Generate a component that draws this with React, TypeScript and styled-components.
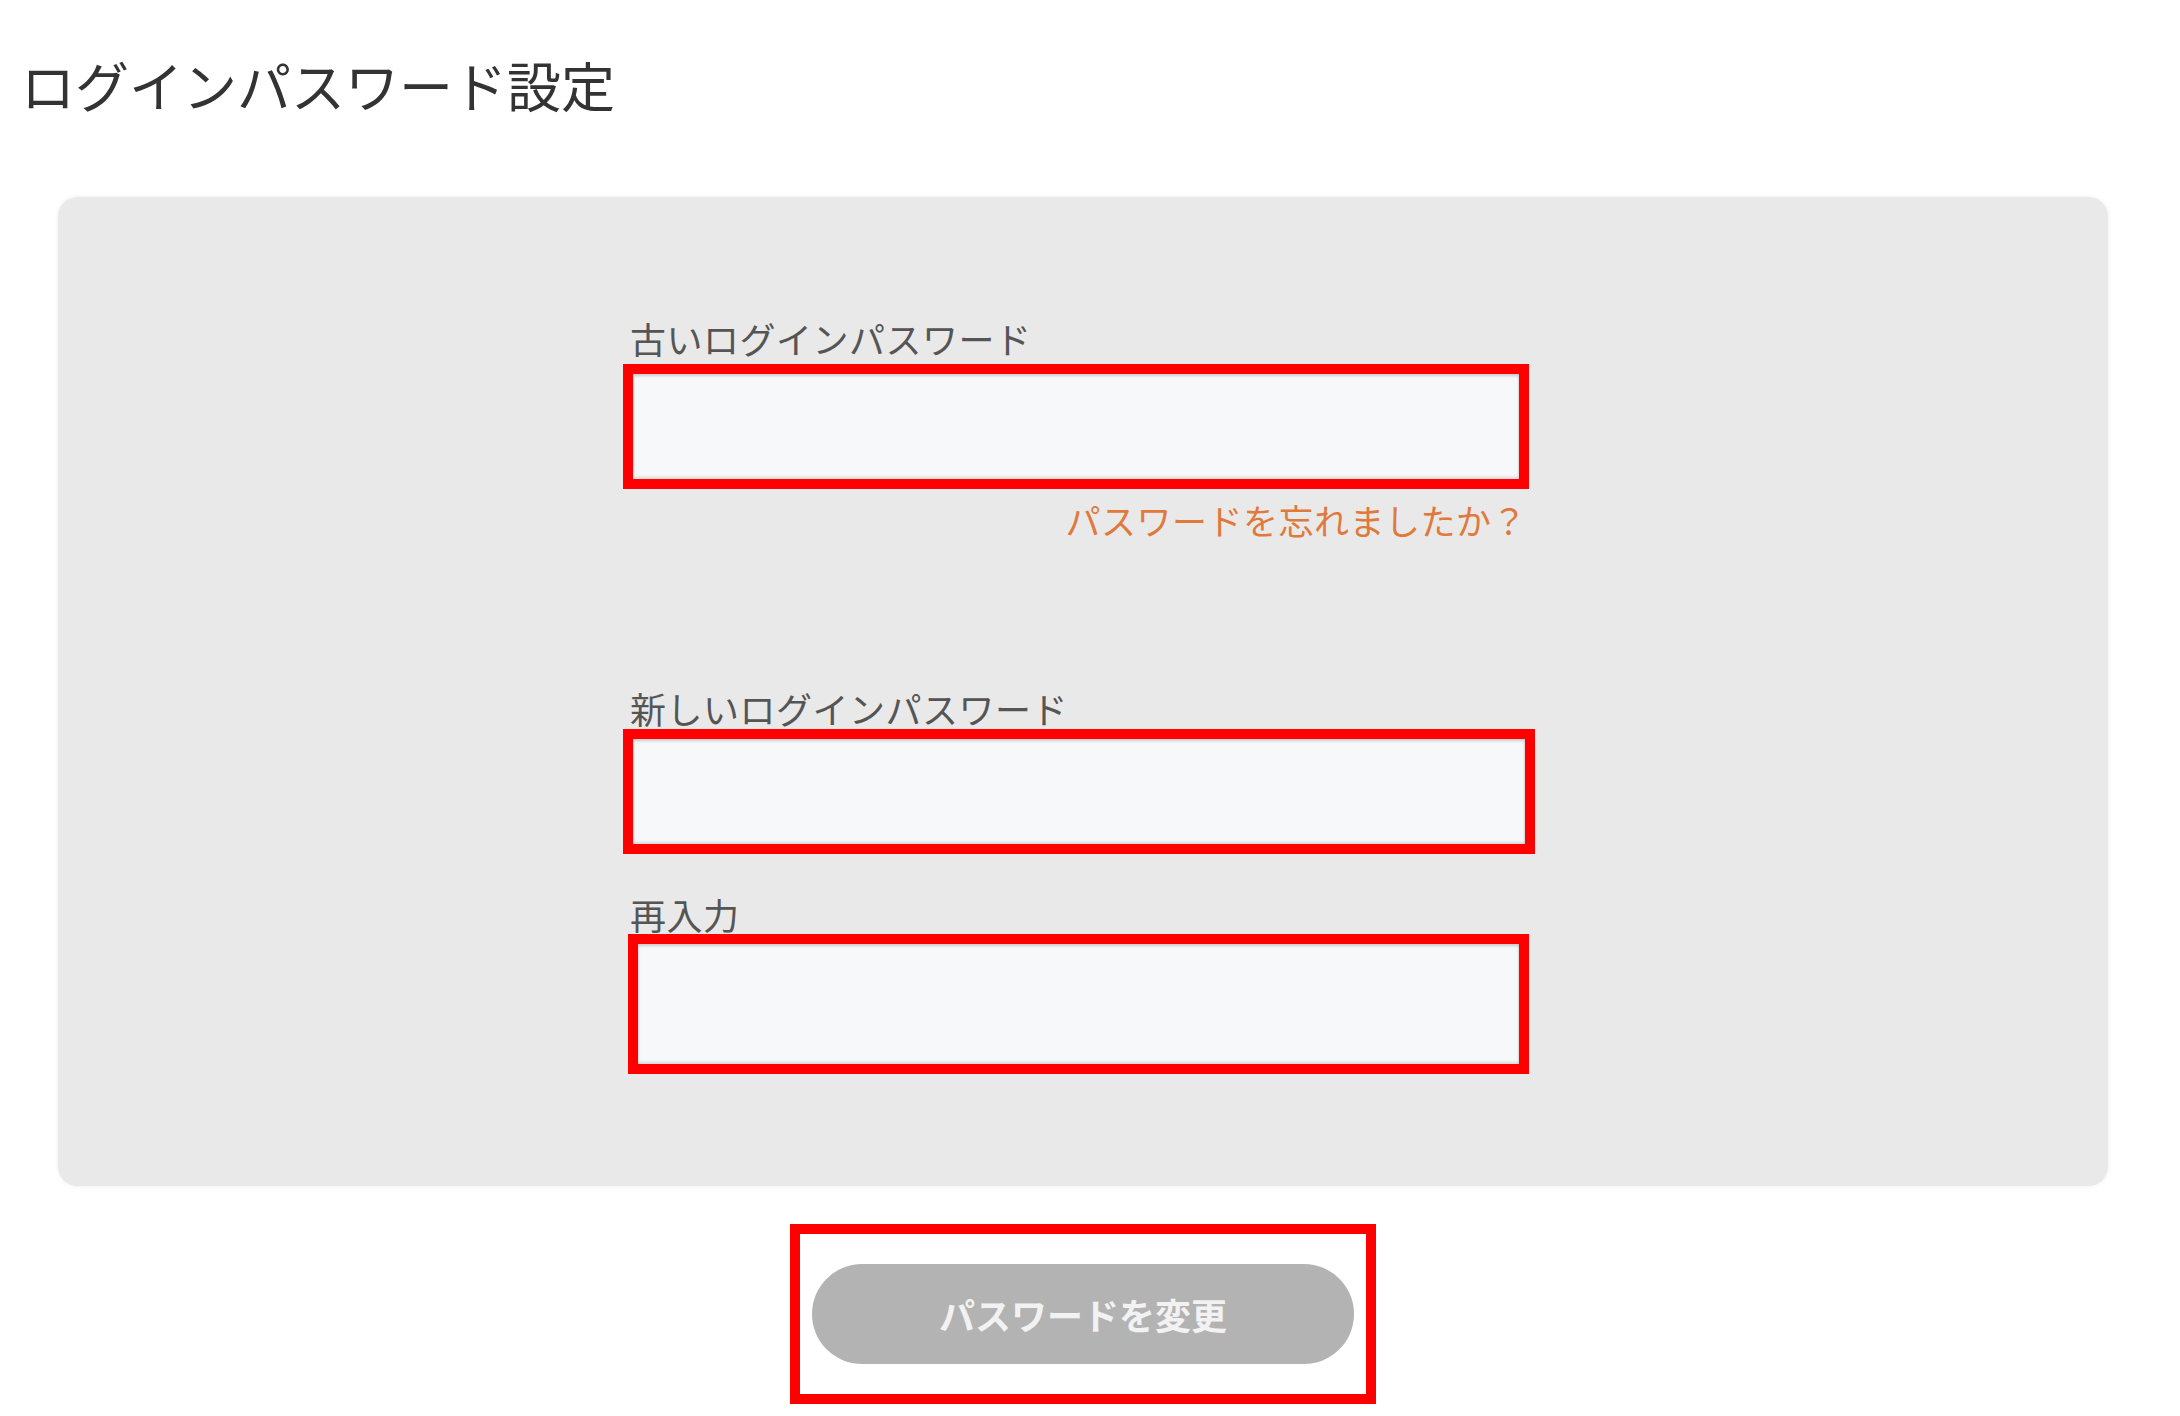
import styled, { createGlobalStyle } from "styled-components";

const GlobalStyle = createGlobalStyle`
  body {
    margin: 0;
    background: #ffffff;
    font-family: "Noto Sans CJK JP", "Noto Sans", sans-serif;
  }
`;

const App = () => {
  return (
    <Page>
      <GlobalStyle />
      <Title>ログインパスワード設定</Title>
      <Panel>
        <Column>
          <Label htmlFor="old">古いログインパスワード</Label>
          <Field width={906} height={125} top={6}>
            <Input id="old" type="password" />
          </Field>
          <ForgotRow width={906}>
            <Forgot href="#">パスワードを忘れましたか？</Forgot>
          </ForgotRow>

          <Label htmlFor="new" gap={148}>
            新しいログインパスワード
          </Label>
          <Field width={912} height={125} top={1}>
            <Input id="new" type="password" />
          </Field>

          <Label htmlFor="again" gap={40}>
            再入力
          </Label>
          <Field width={901} height={140} offset={5}>
            <Input id="again" type="password" />
          </Field>
        </Column>
      </Panel>
      <Bottom>
        <ButtonFrame>
          <Button type="button" disabled>
            パスワードを変更
          </Button>
        </ButtonFrame>
      </Bottom>
    </Page>
  );
};

export default App;

const Page = styled.div`
  width: 2180px;
  min-height: 1416px;
  background: #ffffff;
`;

const Title = styled.h1`
  margin: 0;
  padding: 53px 0 0 21px;
  font-size: 54px;
  line-height: 64px;
  font-weight: 400;
  color: #333333;
`;

const Panel = styled.div`
  margin: 80px 0 0 58px;
  width: 2050px;
  box-sizing: border-box;
  padding: 121px 0 112px;
  background: #e9e9e9;
  border-radius: 20px;
  box-shadow: 0 0 4px rgba(0, 0, 0, 0.08);
  display: flex;
  justify-content: center;
`;

const Column = styled.div`
  width: 912px;
  margin-left: -8px;
  display: flex;
  flex-direction: column;
`;

const Label = styled.label<{ gap?: number }>`
  display: block;
  margin-top: ${(p) => p.gap ?? 0}px;
  padding-left: 7px;
  font-size: 36px;
  line-height: 40px;
  color: #555555;
  letter-spacing: 0.5px;
`;

const Field = styled.div<{
  width: number;
  height: number;
  offset?: number;
  top?: number;
}>`
  width: ${(p) => p.width}px;
  height: ${(p) => p.height}px;
  margin-left: ${(p) => p.offset ?? 0}px;
  margin-top: ${(p) => p.top ?? 0}px;
  box-sizing: border-box;
  border: 10px solid #ff0000;
  display: flex;
`;

const Input = styled.input`
  flex: 1;
  border: none;
  outline: none;
  background: #f7f8fa;
  box-shadow: inset 0 2px 3px rgba(0, 0, 0, 0.18),
    inset 0 -2px 3px rgba(0, 0, 0, 0.12);
  font-size: 30px;
  padding: 0 16px;
`;

const ForgotRow = styled.div<{ width: number }>`
  width: ${(p) => p.width}px;
  margin-top: 11px;
  display: flex;
  justify-content: flex-end;
`;

const Forgot = styled.a`
  font-size: 35px;
  line-height: 40px;
  color: #e07a3c;
  text-decoration: none;
  letter-spacing: 0.5px;
  padding-right: 2px;
`;

const Bottom = styled.div`
  margin: 38px 0 0 58px;
  width: 2050px;
  display: flex;
  justify-content: center;
`;

const ButtonFrame = styled.div`
  width: 586px;
  height: 180px;
  box-sizing: border-box;
  border: 10px solid #ff0000;
  padding: 30px 12px;
  display: flex;
`;

const Button = styled.button`
  flex: 1;
  border: none;
  border-radius: 50px;
  background: #b3b3b3;
  color: #f2f2f2;
  font-family: "Noto Sans CJK JP", "Noto Sans", sans-serif;
  font-size: 36px;
  font-weight: 700;
  letter-spacing: 0;
  cursor: default;
`;
